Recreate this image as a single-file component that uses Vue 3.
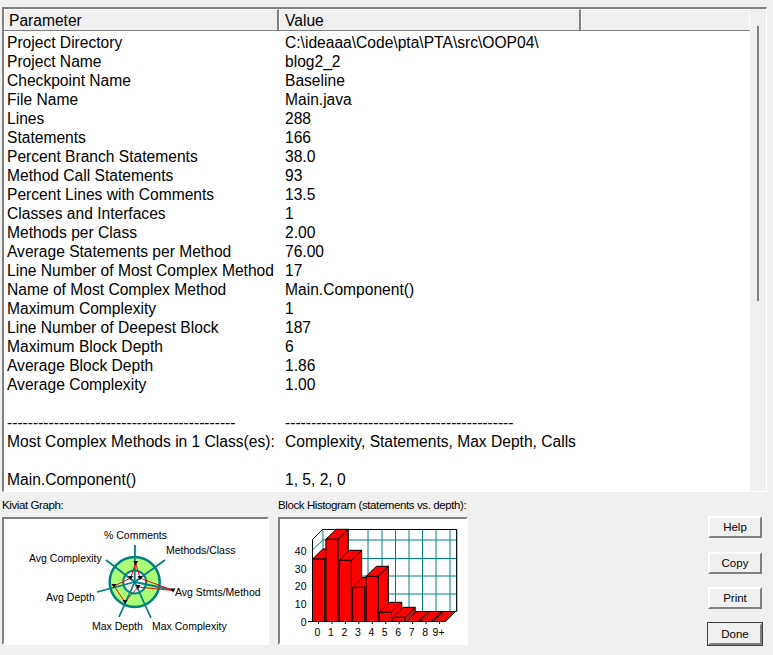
<script setup>
const rows = [
  ['Project Directory', 'C:\\ideaaa\\Code\\pta\\PTA\\src\\OOP04\\'],
  ['Project Name', 'blog2_2'],
  ['Checkpoint Name', 'Baseline'],
  ['File Name', 'Main.java'],
  ['Lines', '288'],
  ['Statements', '166'],
  ['Percent Branch Statements', '38.0'],
  ['Method Call Statements', '93'],
  ['Percent Lines with Comments', '13.5'],
  ['Classes and Interfaces', '1'],
  ['Methods per Class', '2.00'],
  ['Average Statements per Method', '76.00'],
  ['Line Number of Most Complex Method', '17'],
  ['Name of Most Complex Method', 'Main.Component()'],
  ['Maximum Complexity', '1'],
  ['Line Number of Deepest Block', '187'],
  ['Maximum Block Depth', '6'],
  ['Average Block Depth', '1.86'],
  ['Average Complexity', '1.00'],
  ['', ''],
  ['-'.repeat(44), '-'.repeat(44)],
  ['Most Complex Methods in 1 Class(es):', 'Complexity, Statements, Max Depth, Calls'],
  ['', ''],
  ['Main.Component()', '1, 5, 2, 0'],
]

// kiviat, page coordinates
const spokes = [
  [135, 545], [165, 560], [173, 590], [151, 618], [119, 617], [97, 592], [106, 560],
]
const kiviatLabels = [
  ['% Comments', 104, 539],
  ['Methods/Class', 166, 554],
  ['Avg Stmts/Method', 175, 596],
  ['Max Complexity', 152, 630],
  ['Max Depth', 92, 630],
  ['Avg Depth', 46, 601],
  ['Avg Complexity', 29, 562],
]
const redPts = [
  [135.7, 563], [140, 578], [173, 590.5], [138, 587], [125, 602], [114, 586], [130.7, 578],
]
const redLine = redPts.map(p => p.join(',')).join(' ')
const marker = (x, y) => `${x - 2.5},${y - 2} ${x + 2.5},${y - 2} ${x},${y + 2}`

// histogram, page coordinates
const base = 621.5
const dx = 10.3
const dy = 10
const tops = [559, 539.3, 560.3, 587.3, 576.3, 612.3, 617.3, base, base, base]
const bars = tops.map((top, i) => {
  const x = 312.5 + i * 13.4
  const r = x + 12
  return {
    front: `${x},${base} ${x},${top} ${r},${top} ${r},${base}`,
    cap: `${x},${top} ${x + dx},${top - dy} ${r + dx},${top - dy} ${r},${top}`,
    side: `${r},${base} ${r},${top} ${r + dx},${top - dy} ${r + dx},${base - dy}`,
  }
})
const gridX = [323, 336, 348, 368, 382, 395.5, 409, 422.5, 436, 450, 456.7]
const gridY = [529.5, 540, 558.5, 576, 594, 611.5]
const yTicks = [[40, 555], [30, 572.5], [20, 590], [10, 608], [0, 626]]
const xTicks = ['0', '1', '2', '3', '4', '5', '6', '7', '8', '9+']

const buttons = ['Help', 'Copy', 'Print', 'Done']
</script>

<template>
  <div class="window">
    <div class="table-box">
      <div class="table-main">
        <div class="head">
          <div class="head-cell first">Parameter</div>
          <div class="head-cell second">Value</div>
          <div class="head-cell third"></div>
        </div>
        <div class="body">
          <div v-for="(row, i) in rows" :key="i" class="row">
            <span class="param">{{ row[0] }}</span>
            <span class="value">{{ row[1] }}</span>
          </div>
        </div>
      </div>
      <div class="scroll"><div class="thumb"></div></div>
    </div>

    <div class="bottom">
      <div class="graph kiviat">
        <div class="graph-title">Kiviat Graph:</div>
        <div class="panel">
          <svg width="263" height="124" viewBox="4 519 263 124">
            <circle cx="134.7" cy="582" r="25" fill="#aaff77" stroke="#008080" stroke-width="2.5" />
            <circle cx="134.7" cy="582" r="11.5" fill="#fff" stroke="#008080" stroke-width="2" />
            <line v-for="(s, i) in spokes" :key="i" x1="134.7" y1="582" :x2="s[0]" :y2="s[1]" stroke="#008080" stroke-width="1.8" />
            <polygon :points="redLine" fill="none" stroke="#f00" stroke-width="1" />
            <polygon v-for="(p, i) in redPts" :key="'m' + i" :points="marker(p[0], p[1])" fill="#000" />
            <text v-for="l in kiviatLabels" :key="l[0]" :x="l[1]" :y="l[2]" class="chart-text">{{ l[0] }}</text>
          </svg>
        </div>
      </div>

      <div class="graph histo">
        <div class="graph-title">Block Histogram (statements vs. depth):</div>
        <div class="panel">
          <svg width="186" height="124" viewBox="280 519 186 124">
            <rect x="322.7" y="529.5" width="134" height="82" fill="#fff" />
            <line v-for="x in gridX" :key="x" :x1="x" y1="529.5" :x2="x" y2="611.5" stroke="#008080" />
            <line v-for="y in gridY" :key="y" x1="322.7" :y1="y" x2="456.7" :y2="y" stroke="#008080" />
            <line x1="312.5" y1="550" x2="322.7" y2="540" stroke="#008080" />
            <polyline points="312.5,621.5 312.5,539.5 322.7,529.5 456.7,529.5 456.7,611.5" fill="none" stroke="#000" />
            <g v-for="(b, i) in bars" :key="i" fill="#f00" stroke="#000">
              <polygon :points="b.side" />
              <polygon :points="b.cap" />
              <polygon :points="b.front" />
            </g>
            <line x1="308" y1="621.5" x2="446" y2="621.5" stroke="#000" />
            <line v-for="(t, i) in xTicks" :key="'t' + t" :x1="318.5 + i * 13.45" y1="621.5" :x2="318.5 + i * 13.45" y2="624" stroke="#000" />
            <text v-for="t in yTicks" :key="t[0]" x="306.5" :y="t[1]" text-anchor="end" class="chart-text">{{ t[0] }}</text>
            <text v-for="(t, i) in xTicks" :key="t" :x="317.5 + i * 13.45" y="636" text-anchor="middle" class="chart-text">{{ t }}</text>
          </svg>
        </div>
      </div>

      <div class="buttons">
        <button v-for="b in buttons" :key="b" class="btn" :class="{ active: b === 'Done' }">{{ b }}</button>
      </div>
    </div>
  </div>
</template>

<style>
html, body {
  margin: 0;
  background: #f0f0f0;
}
</style>

<style scoped>
.window {
  width: 773px;
  height: 655px;
  background: #f0f0f0;
  font-family: "Liberation Sans", Arial, sans-serif;
  color: #000;
  overflow: hidden;
  padding-top: 7px;
  box-sizing: border-box;
}

.table-box {
  display: flex;
  width: 765px;
  height: 485px;
  margin-left: 2px;
  box-sizing: border-box;
  border-top: 2px solid #808080;
  border-left: 2px solid #808080;
  border-right: 1px solid #fff;
  border-bottom: 1px solid #fff;
}

.table-main {
  width: 746px;
  display: flex;
  flex-direction: column;
}

.head {
  display: flex;
  height: 22px;
  flex: none;
  border-bottom: 1px solid #808080;
  box-sizing: border-box;
}

.head-cell {
  box-sizing: border-box;
  height: 21px;
  font-size: 15.6px;
  line-height: 21px;
  padding-left: 4px;
  background: #f0f0f0;
  border-top: 1px solid #fff;
  border-left: 1px solid #fff;
  border-right: 2px solid #808080;
}

.first {
  width: 275px;
}

.second {
  padding-left: 5px;
  width: 302px;
}

.third {
  flex: 1;
  border-right: 1px solid #fff;
}

.body {
  flex: 1;
  background: #fff;
  overflow: hidden;
  padding-top: 2px;
}

.row {
  display: grid;
  grid-template-columns: 278px 1fr;
  height: 19px;
  line-height: 19px;
  font-size: 15.6px;
  white-space: nowrap;
  padding-left: 3px;
}

.scroll {
  flex: 1;
  padding: 17px 0 0 7px;
}

.thumb {
  width: 2px;
  height: 275px;
  background: #808080;
}

.bottom {
  display: flex;
  margin-top: 6px;
}

.graph-title {
  font-size: 11.5px;
  letter-spacing: -0.4px;
  line-height: 14px;
  height: 19px;
  white-space: nowrap;
}

.kiviat {
  margin-left: 2px;
  width: 267px;
}

.histo {
  margin-left: 9px;
  width: 190px;
}

.panel {
  box-sizing: border-box;
  height: 128px;
  background: #fff;
  border-top: 2px solid #808080;
  border-left: 2px solid #808080;
  border-right: 2px solid #fff;
  border-bottom: 2px solid #fff;
}

.panel svg {
  display: block;
}

.chart-text {
  font-size: 10.5px;
  font-family: "Liberation Sans", Arial, sans-serif;
  fill: #000;
}

.buttons {
  margin-left: 240px;
  padding-top: 18px;
  display: flex;
  flex-direction: column;
  gap: 13.5px;
}

.btn {
  width: 54px;
  height: 22px;
  padding: 0;
  box-sizing: border-box;
  font-family: inherit;
  font-size: 11.5px;
  color: #000;
  background: #f0f0f0;
  border: 2px solid;
  border-color: #fff #808080 #808080 #fff;
  border-radius: 0;
}

.active {
  outline: 1px solid #404040;
  border-color: #f0f0f0 #808080 #808080 #f0f0f0;
}
</style>
